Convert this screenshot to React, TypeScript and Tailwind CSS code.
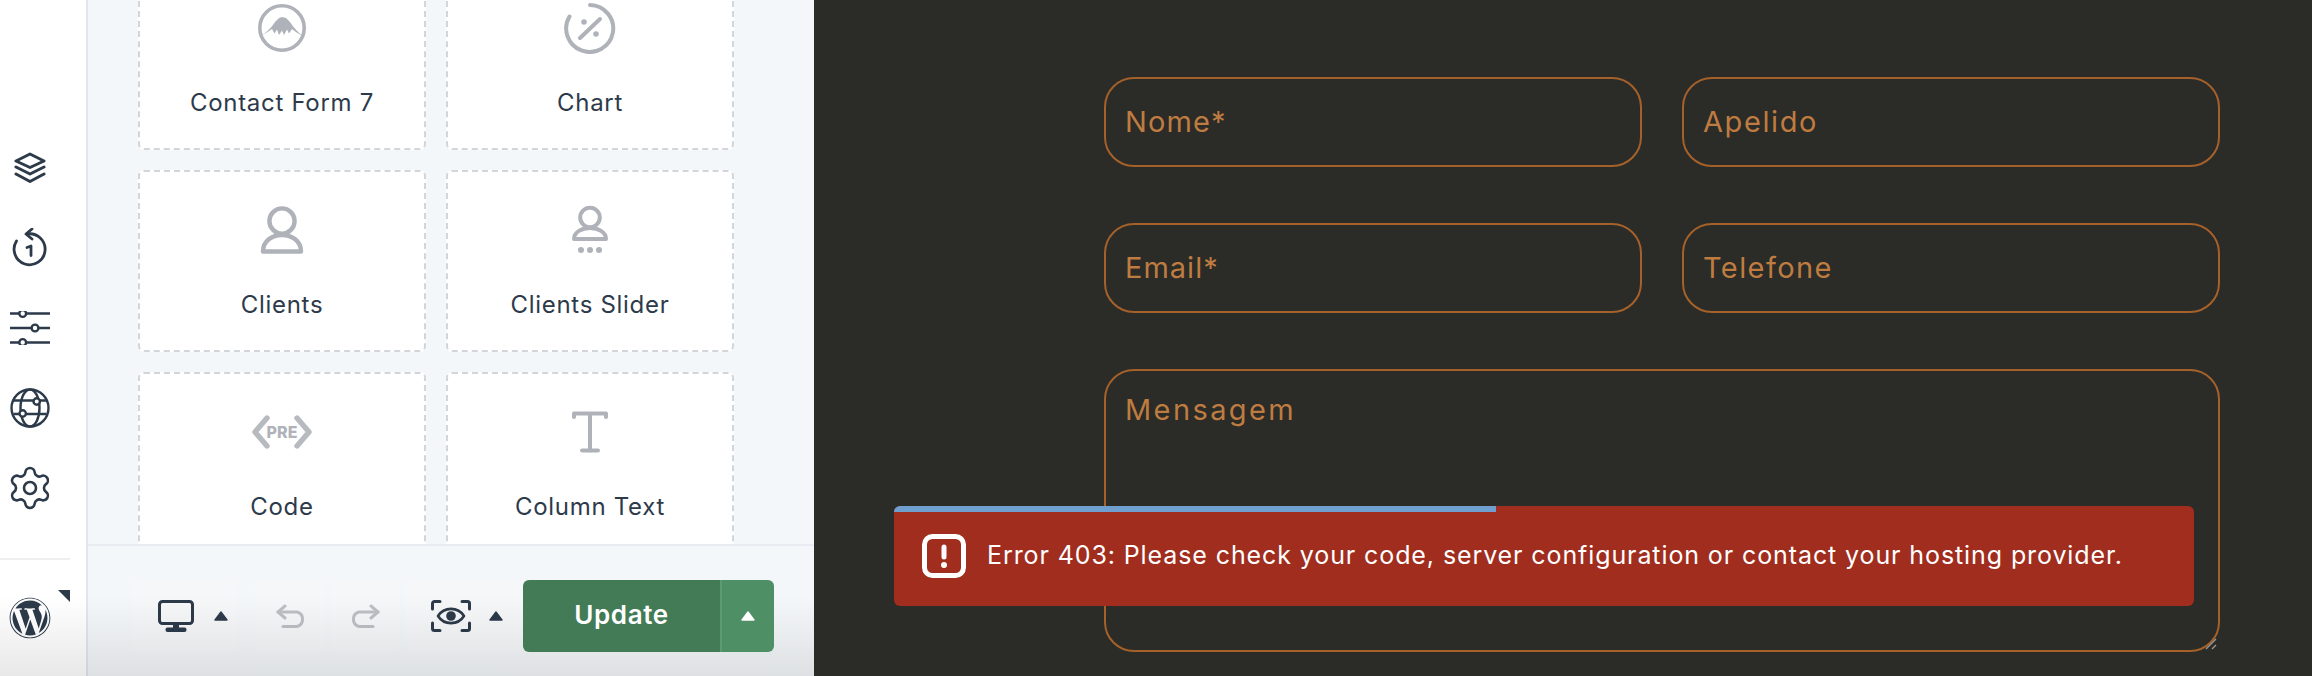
import React from "react";
import { Settings } from "lucide-react";
import { FaWordpress } from "react-icons/fa";

const ink = "#2c3a4a";
const grey = "#afb3b9";

const Layers = () => (
  <svg width="32" height="32" viewBox="0 0 32 32" fill="none" stroke={ink} strokeWidth="3" strokeLinejoin="round" strokeLinecap="round">
    <path d="M16 2 L30 9 L16 15.5 L2 9 Z" />
    <path d="M2 15 L16 22 L30 15" />
    <path d="M2 22 L16 29.5 L30 22" />
  </svg>
);
const HistoryIcon = () => (
  <svg width="40" height="40" viewBox="0 0 40 40" fill="none" stroke={ink} strokeWidth="2.8" strokeLinecap="round" strokeLinejoin="round">
    <path d="M17 6 A15.5 15.5 0 1 1 6.5 13" />
    <path d="M22 1 L16 6 L22 11" />
    <path d="M17 19.5 L21 18 V27.5" />
  </svg>
);
const SlidersIcon = () => (
  <svg width="40" height="34" viewBox="0 0 40 34" fill="none" stroke={ink} strokeWidth="2.4">
    <path d="M0 2.5 H40 M0 17 H40 M0 31.5 H40" />
    <circle cx="12.7" cy="2.5" r="3.4" fill="#fff" />
    <circle cx="25" cy="17" r="3.4" fill="#fff" />
    <circle cx="12.7" cy="31.5" r="3.4" fill="#fff" />
  </svg>
);
const GlobeIcon = () => (
  <svg width="40" height="40" viewBox="0 0 40 40" fill="none" stroke={ink} strokeWidth="2.4">
    <circle cx="20" cy="20" r="18.5" />
    <ellipse cx="20" cy="20" rx="9.5" ry="18.5" />
    <path d="M3.5 12.5 H36.5 M3.5 26 H36.5" />
    <circle cx="26.7" cy="13.5" r="3.2" fill="#fff" />
    <circle cx="12.7" cy="25.5" r="3.2" fill="#fff" />
  </svg>
);
const MonitorIcon = () => (
  <svg width="36" height="32" viewBox="0 0 36 32" fill={ink}>
    <rect x="1.5" y="1.5" width="33" height="22" rx="3" fill="none" stroke={ink} strokeWidth="3" />
    <rect x="15" y="24" width="6" height="4" />
    <rect x="7.5" y="27.5" width="21" height="4.5" rx="2" />
  </svg>
);
const UndoIcon = ({ flip }: { flip?: boolean }) => (
  <svg width="30" height="24" viewBox="0 0 30 24" fill="none" stroke="#bcc0c5" strokeWidth="3" strokeLinecap="round" strokeLinejoin="round" className={flip ? "-scale-x-100" : ""}>
    <path d="M9 2 L2 8 L9 14" />
    <path d="M2 8 H21 A7.5 7.5 0 0 1 21 22.5 H7" />
  </svg>
);
const EyeScan = () => (
  <svg width="40" height="32" viewBox="0 0 40 32" fill="none" stroke={ink} strokeWidth="3" strokeLinecap="round" strokeLinejoin="round">
    <path d="M1.5 9 V3.5 a2 2 0 0 1 2 -2 H9" />
    <path d="M31 1.5 H36.5 a2 2 0 0 1 2 2 V9" />
    <path d="M1.5 23 V28.5 a2 2 0 0 0 2 2 H9" />
    <path d="M31 30.5 H36.5 a2 2 0 0 0 2 -2 V23" />
    <path d="M7 16 C13 6.5 27 6.5 33 16 C27 25.5 13 25.5 7 16 Z" strokeWidth="2.6" />
    <circle cx="20" cy="16" r="4.8" fill={ink} stroke="none" />
  </svg>
);
const Tri = ({ color }: { color: string }) => (
  <svg width="14" height="10" viewBox="0 0 14 10" fill={color} stroke={color} strokeWidth="1.4" strokeLinejoin="round">
    <path d="M7 1 L13 9 H1 Z" />
  </svg>
);
const Mountain = () => (
  <svg width="48" height="48" viewBox="0 0 48 48" fill="none">
    <circle cx="24" cy="24" r="22.2" stroke={grey} strokeWidth="3.6" />
    <path fill={grey} d="M3 32 Q12 26 17 18 L21 14 L24 13 L28 14 L32 18 Q37 26 45 32 Q37 28 34 25 L31 29.5 L29 25.5 L26 31 L24 26.5 L21 31 L19 25.5 L16.5 29.5 L14 25 Q10 28 3 32 Z" />
  </svg>
);
const ChartIcon = () => (
  <svg width="52" height="52" viewBox="0 0 52 52" fill="none" stroke={grey} strokeWidth="4" strokeLinecap="round">
    <path d="M26 3 A23.5 23.5 0 1 1 5.5 14.5" />
    <path d="M16 36 L36 17" />
    <circle cx="20" cy="20" r="2.8" fill={grey} stroke="none" />
    <circle cx="32" cy="32" r="2.8" fill={grey} stroke="none" />
  </svg>
);
const ClientIcon = () => (
  <svg width="44" height="48" viewBox="0 0 44 48" fill="none" stroke={grey} strokeWidth="4.4" strokeLinejoin="round">
    <circle cx="22" cy="15" r="12.6" />
    <path d="M3 45.5 C3 35 12 29 22 29 C32 29 41 35 41 45.5 Z" />
  </svg>
);
const ClientSliderIcon = () => (
  <svg width="40" height="50" viewBox="0 0 40 50" fill="none" stroke={grey} strokeWidth="4" strokeLinejoin="round">
    <circle cx="20" cy="12.5" r="9.8" />
    <path d="M4 34 C4 27 12 23 20 23 C28 23 36 27 36 34 Z" />
    <circle cx="11" cy="45" r="3" fill={grey} stroke="none" />
    <circle cx="20" cy="45" r="3" fill={grey} stroke="none" />
    <circle cx="29" cy="45" r="3" fill={grey} stroke="none" />
  </svg>
);
const PreIcon = () => (
  <svg width="60" height="34" viewBox="0 0 60 34" fill="none">
    <path d="M15 3 L3 17 L15 31 M45 3 L57 17 L45 31" stroke="#b7babf" strokeWidth="5.4" strokeLinecap="round" strokeLinejoin="round" />
    <text x="30" y="22.5" textAnchor="middle" fill="#b0b3b9" fontSize="16" fontWeight="800" fontFamily="Inter, sans-serif">PRE</text>
  </svg>
);
const TIcon = () => (
  <svg width="36" height="42" viewBox="0 0 36 42" fill="none" stroke={grey} strokeWidth="4" strokeLinecap="round" strokeLinejoin="round">
    <path d="M2 6 V2.5 H34 V6" />
    <path d="M18 3 V39.5" />
    <path d="M10 39.5 H26" />
  </svg>
);
const AlertIcon = () => (
  <svg width="44" height="44" viewBox="0 0 44 44" fill="none" stroke="#fff" strokeWidth="5" strokeLinecap="round">
    <rect x="2.5" y="2.5" width="39" height="39" rx="8" />
    <path d="M22 13 V23" />
    <circle cx="22" cy="31" r="3" fill="#fff" stroke="none" />
  </svg>
);

const cards: { label: string; icon: React.ReactNode }[] = [
  { label: "Contact Form 7", icon: <Mountain /> },
  { label: "Chart", icon: <ChartIcon /> },
  { label: "Clients", icon: <ClientIcon /> },
  { label: "Clients Slider", icon: <ClientSliderIcon /> },
  { label: "Code", icon: <PreIcon /> },
  { label: "Column Text", icon: <TIcon /> },
];

const Field = ({ label, track }: { label: string; track: string }) => (
  <div className={`flex h-[90px] items-center rounded-[30px] border-2 border-[#a5612a] pl-[19px] text-[29px] font-normal text-[#bf7c41] ${track}`}>
    {label}
  </div>
);

export default function App() {
  return (
    <div className="relative flex h-[676px] w-[2312px] overflow-hidden bg-white [font-family:Inter,sans-serif]">
      <aside className="flex w-[88px] shrink-0 flex-col border-r-2 border-[#e1e6ed] bg-white pr-[26px] pt-[128px]">
        {[<Layers />, <HistoryIcon />, <SlidersIcon />, <GlobeIcon />, <Settings size={48} strokeWidth={1.3} color={ink} />].map((icon, i) => (
          <div key={i} className="flex h-[80px] items-center justify-center">
            {icon}
          </div>
        ))}
        <div className="mt-[30px] h-[2px] w-[70px] bg-[#edeff1]" />
        <div className="relative flex h-[116px] items-center justify-center">
          <FaWordpress size={42} color={ink} />
          <div className="absolute right-[-10px] top-[30px] h-0 w-0 border-l-[12px] border-t-[12px] border-l-transparent border-t-[#2c3a4a]" />
        </div>
      </aside>

      <section className="flex w-[726px] shrink-0 flex-col bg-[#f4f7f9]">
        <div className="h-[544px] overflow-hidden pl-[50px]">
          <div className="-mt-[32px] grid w-[596px] grid-cols-2 gap-x-[20px] gap-y-[20px]">
            {cards.map((c) => (
              <div key={c.label} className="flex h-[182px] flex-col items-center rounded-md border-2 border-dashed border-[#d2d5d9] bg-white pt-[22px]">
                <div className="flex h-[72px] items-center justify-center">{c.icon}</div>
                <div className="mt-[23px] text-[24px] leading-[32px] tracking-[0.7px] text-[#2d3a4a]">{c.label}</div>
              </div>
            ))}
          </div>
        </div>
        <div className="flex h-[132px] items-start border-t-2 border-[#e8ecf2] pl-[44px] pt-[34px]">
          <div className="flex h-[72px] w-[106px] items-center gap-[20px] rounded-md bg-[#f6f7f8] pl-[26px]">
            <MonitorIcon />
            <Tri color={ink} />
          </div>
          <div className="ml-[17px] flex h-[72px] w-[71px] items-center justify-center rounded-md bg-[#f6f7f8]">
            <UndoIcon />
          </div>
          <div className="ml-[4px] flex h-[72px] w-[70px] items-center justify-center rounded-md bg-[#f6f7f8]">
            <UndoIcon flip />
          </div>
          <div className="ml-[6px] flex h-[72px] w-[117px] items-center gap-[18px] rounded-md bg-[#f6f7f8] pl-[25px]">
            <EyeScan />
            <Tri color={ink} />
          </div>
          <div className="relative z-10 flex h-[72px] w-[251px] overflow-hidden rounded-md">
            <div className="flex h-full w-[197px] items-center justify-center bg-[#427b55] pb-[3px] text-[26px] font-semibold tracking-[0.6px] text-white">Update</div>
            <div className="flex h-full flex-1 items-center justify-center border-l-2 border-[#5c9a72] bg-[#4f8f66]">
              <Tri color="#ffffff" />
            </div>
          </div>
        </div>
      </section>

      <main className="flex-1 bg-[#2b2b27] pl-[290px] pr-[92px] pt-[77px]">
        <div className="grid grid-cols-2 gap-x-[40px] gap-y-[56px]">
          <Field label="Nome*" track="tracking-[1.1px]" />
          <Field label="Apelido" track="tracking-[1.6px]" />
          <Field label="Email*" track="tracking-[1px]" />
          <Field label="Telefone" track="tracking-[1.4px]" />
          <textarea
            readOnly
            defaultValue="Mensagem"
            className="col-span-2 h-[283px] resize-none rounded-[30px] border-2 border-[#a5612a] bg-transparent pl-[19px] pt-[19px] text-[29px] font-normal leading-[40px] tracking-[2.4px] text-[#bf7c41] outline-none"
          />
        </div>
      </main>

      <div className="pointer-events-none absolute bottom-0 left-0 h-[80px] w-[814px] bg-gradient-to-b from-transparent to-[#00000017]" />

      <svg className="absolute left-[2205px] top-[638px]" width="12" height="12" viewBox="0 0 12 12" fill="none" stroke="#9a9a98" strokeWidth="1.3">
        <path d="M1 11 L11 1 M7 11 L11 7" />
      </svg>

      <div className="absolute left-[894px] top-[506px] flex h-[100px] w-[1300px] items-center overflow-hidden rounded-md bg-[#a02d1e] pl-[28px]">
        <div className="absolute left-0 top-0 h-[6px] w-[602px] bg-[#6f9fcf]" />
        <AlertIcon />
        <span className="ml-[21px] text-[25px] tracking-[0.9px] text-white">Error 403: Please check your code, server configuration or contact your hosting provider.</span>
      </div>
    </div>
  );
}
